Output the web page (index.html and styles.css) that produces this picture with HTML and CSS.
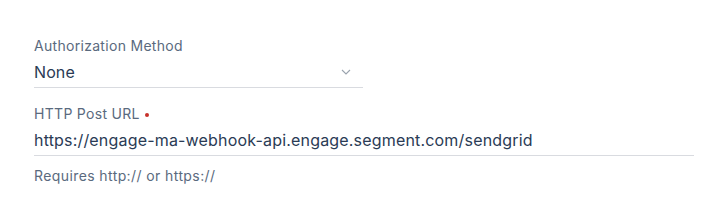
FILE: index.html
```html
<!DOCTYPE html>
<html>
<head>
<meta charset="utf-8">
<link rel="stylesheet" href="styles.css">
</head>
<body>
<form class="form">
  <div class="field field-select">
    <label class="label">Authorization Method</label>
    <div class="control">
      <span class="value">None</span>
      <svg class="chevron" width="10" height="6" viewBox="0 0 10 6"><path d="M1 1l4 4 4-4" fill="none" stroke="#9aa3ae" stroke-width="1.1"/></svg>
    </div>
  </div>
  <div class="field field-url">
    <label class="label">HTTP Post URL <span class="required"></span></label>
    <div class="control">
      <span class="value value-url">https://engage-ma-webhook-api.engage.segment.com/sendgrid</span>
    </div>
    <div class="help">Requires http:// or https://</div>
  </div>
</form>
</body>
</html>
```
FILE: styles.css
```css
html, body { margin: 0; padding: 0; background: #fff; }
body { font-family: Inter, "Open Sans", sans-serif; }
.form { padding: 36px 0 0 34px; display: flex; flex-direction: column; gap: 16px; }
.field { display: flex; flex-direction: column; }
.field-select { width: 329px; }
.field-url { width: 660px; }
.label { font-size: 14px; line-height: 20px; color: #5a6a7e; letter-spacing: 0.3px; display: flex; align-items: center; gap: 5px; }
.required { width: 4px; height: 4px; border-radius: 50%; background: #c7312b; display: inline-block; margin-top: 1px; }
.control { display: flex; align-items: center; justify-content: space-between; height: 31px; border-bottom: 1px solid #d9dbe0; }
.value { font-size: 16px; color: #2a3b55; letter-spacing: 0.1px; }
.value-url { letter-spacing: 0.18px; }
.chevron { margin-right: 12px; }
.help { margin-top: 10px; font-size: 14px; line-height: 20px; color: #5a6a7e; letter-spacing: 0.4px; }
```
